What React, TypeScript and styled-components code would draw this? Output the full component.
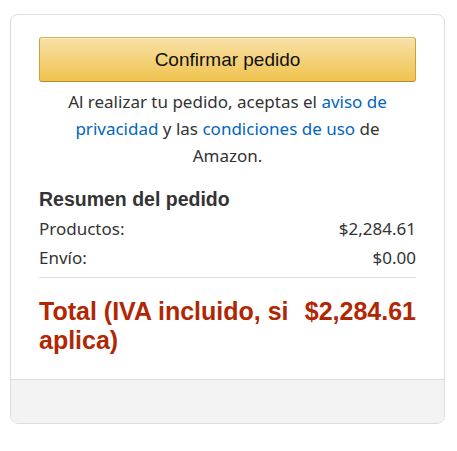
import React from "react";
import styled, { createGlobalStyle } from "styled-components";

const GlobalStyle = createGlobalStyle`
	html, body {
		margin: 0;
		padding: 0;
		background: #ffffff;
	}
	body {
		font-family: "Noto Sans", "Open Sans", Arial, sans-serif;
		color: #333333;
	}
`;

const Page = styled.div`
	padding: 14px 12px 0 10px;
`;

const Card = styled.div`
	width: 435px;
	box-sizing: border-box;
	border: 1px solid #dddddd;
	border-radius: 8px;
	overflow: hidden;
	background: #ffffff;
`;

const CardBody = styled.div`
	padding: 22px 28px 24px;
	display: flex;
	flex-direction: column;
`;

const PlaceOrderButton = styled.button`
	height: 45px;
	width: 100%;
	box-sizing: border-box;
	border: 1px solid #c89f3f;
	border-color: #d7b25b #c8a041 #b48a2c;
	border-radius: 3px;
	background: linear-gradient(to bottom, #f8e1a8, #f0c34e);
	box-shadow: inset 0 1px 0 rgba(255, 255, 255, 0.4);
	font-family: "Liberation Sans", Arial, sans-serif;
	font-size: 19px;
	color: #111111;
	cursor: pointer;
`;

const Notice = styled.p`
	margin: 6px 0 0;
	text-align: center;
	font-size: 17px;
	line-height: 27px;
	color: #333333;
`;

const Link = styled.a`
	color: #0066c0;
	text-decoration: none;
`;

const SummaryTitle = styled.h3`
	margin: 18px 0 0;
	font-family: "Liberation Sans", Arial, sans-serif;
	font-weight: 700;
	font-size: 19.5px;
	line-height: 24px;
	color: #333333;
`;

const Rows = styled.div`
	display: flex;
	flex-direction: column;
	margin-top: 3px;
	padding-bottom: 5px;
	border-bottom: 1px solid #dddddd;
`;

const SummaryRow = styled.div`
	display: flex;
	justify-content: space-between;
	font-size: 17px;
	line-height: 29px;
	color: #333333;
`;

const TotalRow = styled.div`
	margin-top: 19px;
	display: flex;
	justify-content: space-between;
	gap: 10px;
	font-family: "Liberation Sans", Arial, sans-serif;
	font-weight: 700;
	font-size: 25px;
	line-height: 29px;
	color: #b12704;
`;

const CardFooter = styled.div`
	height: 43px;
	background: #f3f3f3;
	border-top: 1px solid #dddddd;
`;

export default function App() {
	return (
		<>
			<GlobalStyle />
			<Page>
				<Card>
					<CardBody>
						<PlaceOrderButton>Confirmar pedido</PlaceOrderButton>
						<Notice>
							Al realizar tu pedido, aceptas el <Link href="#">aviso de privacidad</Link> y las{" "}
							<Link href="#">condiciones de uso</Link> de Amazon.
						</Notice>
						<SummaryTitle>Resumen del pedido</SummaryTitle>
						<Rows>
							<SummaryRow>
								<span>Productos:</span>
								<span>$2,284.61</span>
							</SummaryRow>
							<SummaryRow>
								<span>Envío:</span>
								<span>$0.00</span>
							</SummaryRow>
						</Rows>
						<TotalRow>
							<span>Total (IVA incluido, si aplica)</span>
							<span>$2,284.61</span>
						</TotalRow>
					</CardBody>
					<CardFooter />
				</Card>
			</Page>
		</>
	);
}
